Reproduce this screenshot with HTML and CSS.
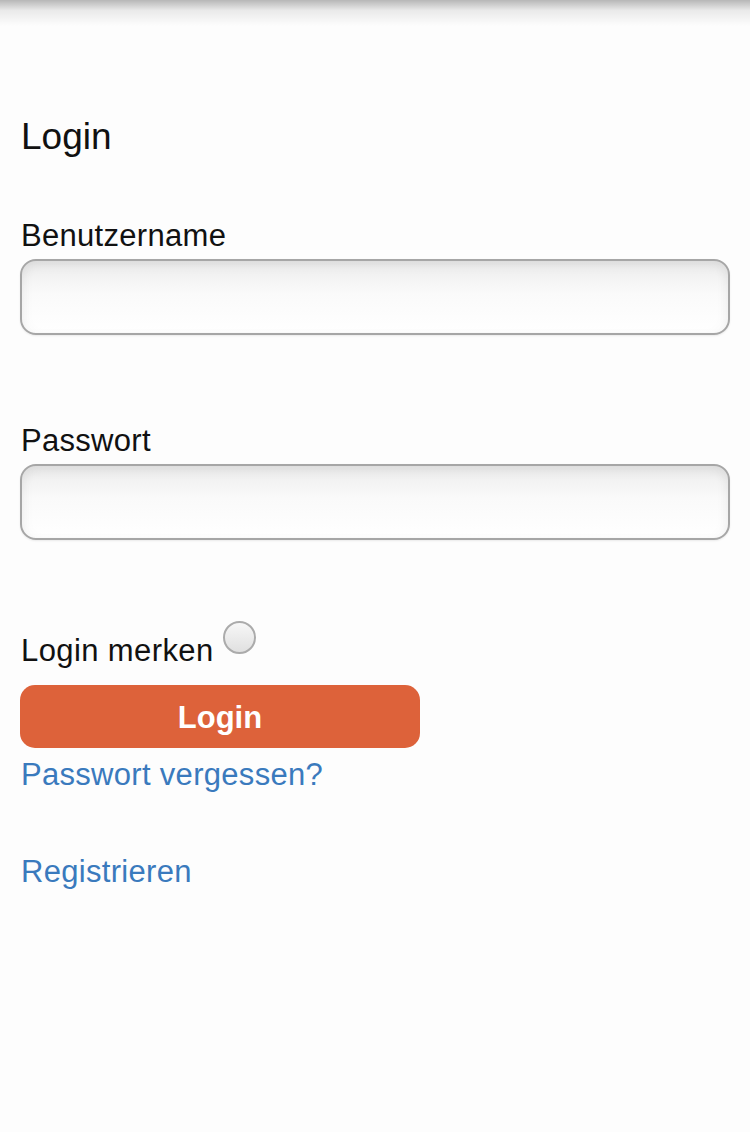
FILE: index.html
```html
<!DOCTYPE html>
<html>
<head>
    <title>Login</title>
    <link rel="stylesheet" href="styles.css">
</head>
<body>
    <div class="top-shadow"></div>

    <div class="page">
        <h1>Login</h1>

        <form class="login-form">
            <label for="benutzername">Benutzername</label>
            <input type="text" id="benutzername" class="field">

            <label for="passwort" class="label-gap">Passwort</label>
            <input type="password" id="passwort" class="field">

            <div class="remember">
                <span class="remember-text">Login merken</span>
                <input type="radio" id="merken" class="radio">
            </div>

            <button type="submit" class="btn-login">Login</button>
        </form>

        <a href="#" class="link link-forgot">Passwort vergessen?</a>
        <a href="#" class="link link-register">Registrieren</a>
    </div>
</body>
</html>
```

FILE: styles.css
```css
body {
    font-family: "Liberation Sans", Arial, sans-serif;
    background-color: #fdfdfd;
    color: #111;
    margin: 0;
    padding: 0;
}

.top-shadow {
    height: 26px;
    background: linear-gradient(rgba(0, 0, 0, 0.28), rgba(0, 0, 0, 0.08) 40%, rgba(0, 0, 0, 0));
}

.page {
    padding: 0 20px;
}

h1 {
    font-size: 37px;
    font-weight: normal;
    line-height: 44px;
    margin: 89px 0 0 1px;
}

.login-form label {
    display: block;
    font-size: 31px;
    letter-spacing: 0.3px;
    line-height: 36px;
    margin: 59px 0 0 1px;
}

.login-form .label-gap {
    margin-top: 88px;
}

.field {
    display: block;
    box-sizing: border-box;
    width: 100%;
    height: 76px;
    margin-top: 5px;
    border: 2px solid #a6a6a6;
    border-radius: 16px;
    background: linear-gradient(#ececec, #fafafa 45%, #fff);
    box-shadow: inset 0 6px 10px rgba(0, 0, 0, 0.05), inset 6px 0 10px rgba(0, 0, 0, 0.02), inset -6px 0 10px rgba(0, 0, 0, 0.02), 0 1px 2px rgba(0, 0, 0, 0.08);
    outline: none;
    font-size: 30px;
    padding: 0 16px;
}

.remember {
    display: flex;
    align-items: flex-start;
    margin-top: 81px;
}

.remember-text {
    font-size: 31px;
    letter-spacing: 0.4px;
    line-height: 36px;
    margin: 12px 0 0 1px;
}

.radio {
    -webkit-appearance: none;
    appearance: none;
    box-sizing: border-box;
    width: 33px;
    height: 33px;
    margin: 0 0 0 9px;
    border: 2px solid #ababab;
    border-radius: 50%;
    background: linear-gradient(#f7f7f7, #e0e0e0);
}

.btn-login {
    display: block;
    width: 400px;
    height: 63px;
    margin-top: 16px;
    border: none;
    border-radius: 15px;
    background-color: #dd623a;
    color: #fff;
    font-family: "Liberation Sans", Arial, sans-serif;
    font-size: 31px;
    font-weight: bold;
    padding: 2px 0 0 0;
    cursor: pointer;
}

.link {
    display: block;
    width: max-content;
    font-size: 31px;
    letter-spacing: 0.3px;
    line-height: 36px;
    color: #3a7abd;
    text-decoration: none;
    margin-left: 1px;
}

.link-forgot {
    margin-top: 9px;
}

.link-register {
    margin-top: 61px;
}
```
